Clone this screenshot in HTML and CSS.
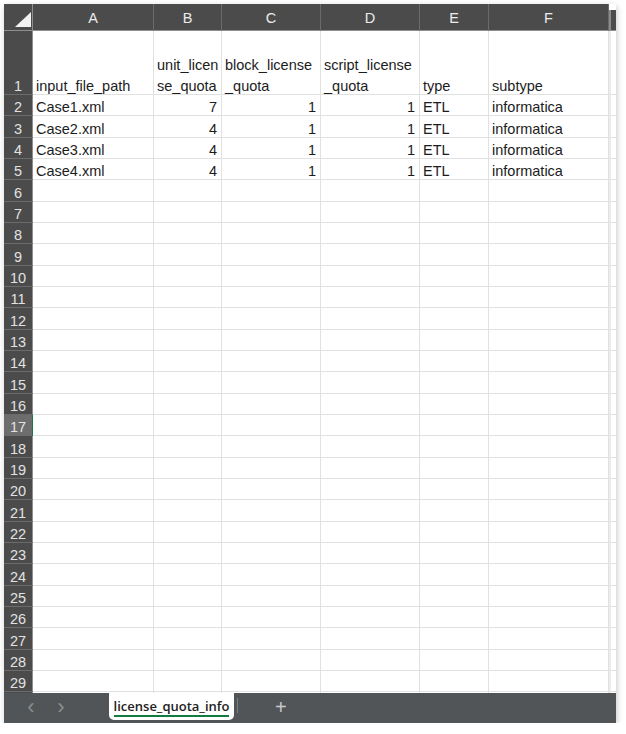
FILE: index.html
```html
<!DOCTYPE html>
<html lang="en">
<head>
  <meta charset="UTF-8">
  <meta name="viewport" content="width=device-width, initial-scale=1.0">
  <title>license_quota_info</title>
  <link rel="stylesheet" href="styles.css">
</head>
<body>
  <div class="window">
    <div class="sheet" id="sheet">
      <div class="corner"><span class="corner-tri"></span></div>
      <div class="col-head">A</div>
      <div class="col-head">B</div>
      <div class="col-head">C</div>
      <div class="col-head">D</div>
      <div class="col-head">E</div>
      <div class="col-head">F</div>
      <div class="col-head edge"></div>
    </div>
    <div class="tabbar">
      <div class="nav">
        <span class="nav-btn">&#8249;</span>
        <span class="nav-btn">&#8250;</span>
      </div>
      <div class="tab"><span class="tab-name">license_quota_info</span></div>
      <span class="tab-sep"></span>
      <span class="add-sheet">+</span>
    </div>
  </div>
  <script>
    // Sheet data, row 1 holds the wrapped headers
    const rows = [
      ['input_file_path', 'unit_licen<br>se_quota', 'block_license<br>_quota', 'script_license<br>_quota', 'type', 'subtype'],
      ['Case1.xml', 7, 1, 1, 'ETL', 'informatica'],
      ['Case2.xml', 4, 1, 1, 'ETL', 'informatica'],
      ['Case3.xml', 4, 1, 1, 'ETL', 'informatica'],
      ['Case4.xml', 4, 1, 1, 'ETL', 'informatica'],
    ];
    const sheet = document.getElementById('sheet');

    // row 30 only peeks out above the tab bar, so its number is left off
    for (let r = 1; r <= 30; r++) {
      const data = rows[r - 1] || [];
      const head = document.createElement('div');
      head.className = 'row-head' + (r === 17 ? ' active' : '');
      if (r < 30) head.innerHTML = `<span>${r}</span>`;
      sheet.appendChild(head);

      for (let c = 0; c < 7; c++) {
        const cell = document.createElement('div');
        cell.className = 'cell';
        const value = data[c];
        if (typeof value === 'number') cell.classList.add('num');
        if (value !== undefined) cell.innerHTML = `<span>${value}</span>`;
        if (c === 6) cell.classList.add('edge');
        sheet.appendChild(cell);
      }
    }
  </script>
</body>
</html>
```

FILE: styles.css
```css
* {
  margin: 0;
  padding: 0;
  box-sizing: border-box;
}
body {
  background: #fff;
  font-family: "Liberation Sans", Arial, sans-serif;
  overflow: hidden;
}
.window {
  margin: 4px 0 0 4px;
  width: 612px;
  height: 719px;
  display: flex;
  flex-direction: column;
  background: #fff;
  box-shadow: 1px 2px 6px rgba(0,0,0,0.22);
}
.sheet {
  height: 689px;
  overflow: hidden;
  display: grid;
  grid-template-columns: 29px 121px 68px 99px 99px 69px 120px 7px;
  grid-template-rows: 27px 64px;
  grid-auto-rows: 21.33px;
  font-size: 14.5px;
  color: #1c1c1c;
}
.corner {
  background: #4b4b4b;
  border-right: 1px solid #8e8e8e;
  border-bottom: 1px solid #8e8e8e;
  position: relative;
}
.corner-tri {
  position: absolute;
  right: 1px;
  bottom: 3px;
  width: 0;
  height: 0;
  border-left: 16px solid transparent;
  border-bottom: 15px solid #f2f2f2;
}
.col-head {
  background: #4b4b4b;
  color: #ececec;
  font-size: 14.5px;
  display: flex;
  align-items: center;
  justify-content: center;
  padding-top: 2px;
  border-right: 1px solid #6b6b6b;
  border-bottom: 1px solid #8e8e8e;
}
.col-head.edge {
  border-left: 2px solid #8a8a8a;
  border-right: none;
  margin-top: 6px;
}
.row-head {
  background: #4b4b4b;
  color: #e2e2e2;
  font-size: 14.5px;
  display: flex;
  align-items: flex-end;
  justify-content: center;
  line-height: 21px;
  border-right: 1px solid #8e8e8e;
  border-bottom: 1px solid #6b6b6b;
}
.row-head span,
.cell span {
  margin-bottom: -3px;
}
.row-head.active {
  background: #6d6d6d;
  border-right: 1px solid #107c41;
}
.cell {
  border-right: 1px solid #e1e1e1;
  border-bottom: 1px solid #e1e1e1;
  padding: 0 3px;
  line-height: 21px;
  display: flex;
  align-items: flex-end;
  white-space: nowrap;
  overflow: hidden;
}
.cell.num {
  justify-content: flex-end;
  padding-right: 4px;
}
.cell.edge {
  border-left: 2px solid #ececec;
  border-right: none;
}
.tabbar {
  flex: 1;
  background: #515558;
  display: flex;
  align-items: flex-start;
}
.nav {
  width: 105px;
  height: 100%;
  display: flex;
  align-items: center;
  padding: 0 0 2px 20px;
  gap: 16px;
}
.nav-btn {
  color: #8a8e91;
  font-size: 22px;
  line-height: 24px;
  width: 14px;
  text-align: center;
}
.tab {
  width: 125px;
  height: 27px;
  background: #fff;
  border-radius: 0 0 5px 5px;
  display: flex;
  align-items: center;
  justify-content: center;
}
.tab-name {
  font-family: "Open Sans", sans-serif;
  font-size: 13px;
  font-weight: 600;
  color: #222;
  border-bottom: 2px solid #107c41;
  line-height: 17px;
  margin-top: 2px;
}
.tab-sep {
  width: 1px;
  height: 15px;
  margin: 5px 0 0 3px;
  background: #7a7e81;
}
.add-sheet {
  align-self: center;
  color: #c9cbcc;
  font-size: 20px;
  font-weight: 300;
  line-height: 24px;
  margin: 0 0 2px 37px;
}
```
